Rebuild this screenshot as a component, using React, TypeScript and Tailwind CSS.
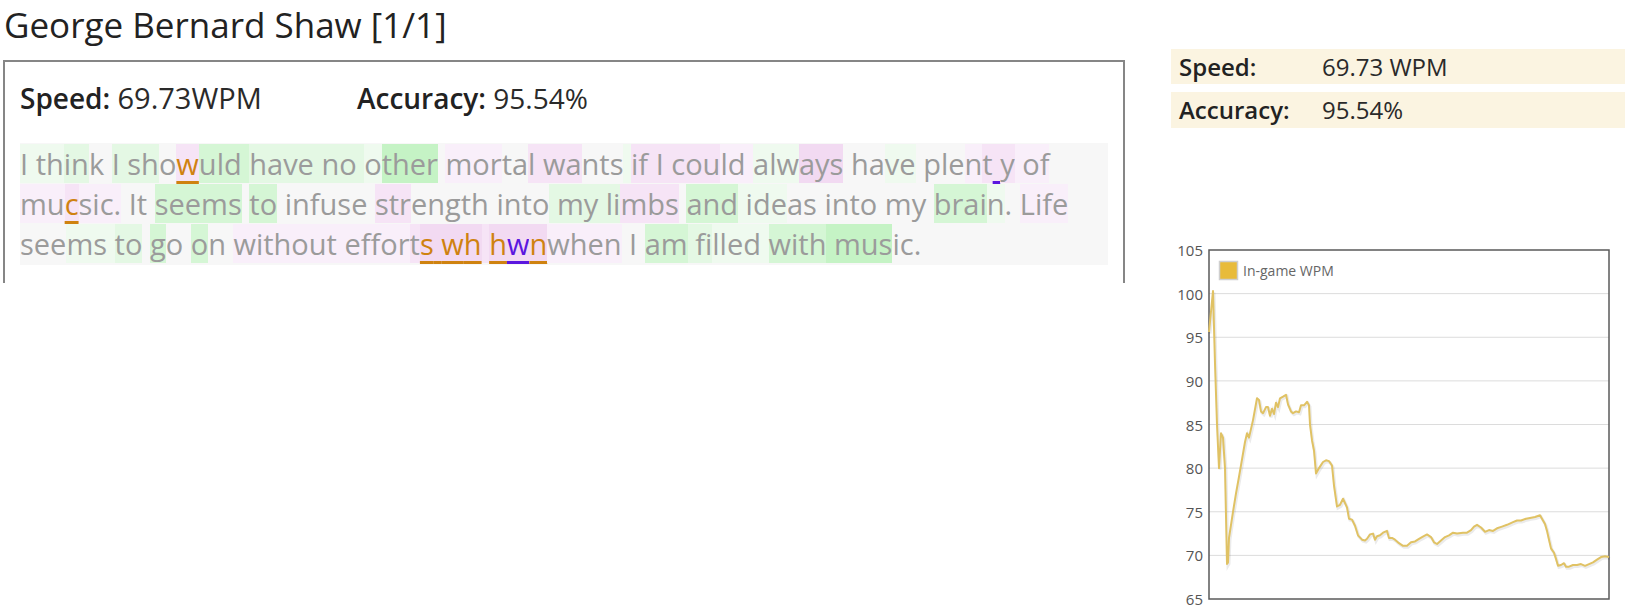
import React from "react";

type Seg = [string, string, string?];

const BG: Record<string, string> = {
  b: "bg-[#f7f7f7]",
  g1: "bg-[#effaef]",
  g2: "bg-[#e4f8e4]",
  g3: "bg-[#d5f6d5]",
  g4: "bg-[#c5f3c5]",
  p1: "bg-[#f9effa]",
  p2: "bg-[#f6e4f6]",
  p3: "bg-[#f2daf2]",
};

const lines: Seg[][] = [
  [
    ["I ", "g1"], ["th", "g1"], ["in", "g2"], ["k ", "b"], ["I sh", "g2"], ["o", "b"],
    ["w", "p2", "o"], ["uld ", "g3"], ["have no ", "g2"], ["o", "g1"], ["ther", "g4"],
    [" ", "b"], ["mor", "p1"], ["ta", "b"], ["l wa", "p2"], ["nts", "b"], [" ", "g1"],
    ["if I cou", "p2"], ["ld ", "p1"], ["alw", "g1"], ["ays", "p3"], [" ha", "b"],
    ["ve", "g1"], [" ple", "b"], ["n", "p1"], ["t", "p2"], [" ", "p2", "p"], ["y", "p2"],
    [" of", "p1"],
  ],
  [
    ["mu", "p1"], ["c", "p2", "o"], ["sic.", "p1"], [" It ", "b"], ["seems", "g3"],
    [" ", "b"], ["to", "g3"], [" infuse ", "b"], ["str", "p2"], ["ength ", "b"],
    ["into", "b"], [" my li", "g2"], ["mbs", "p2"], [" ", "b"], ["and", "g3"],
    [" ide", "g1"], ["as into my ", "b"], ["brai", "g3"], ["n", "g1"], [". ", "b"],
    ["Life", "p1"],
  ],
  [
    ["see", "b"], ["ms ", "g1"], ["to", "g2"], [" ", "b"], ["g", "g3"], ["o ", "b"],
    ["o", "g3"], ["n ", "b"], ["without ", "p1"], ["effor", "p1"], ["t", "p2"],
    ["s wh", "p3", "o"], [" ", "p2"], ["h", "p3", "o"], ["w", "p3", "p"], ["n", "p3", "o"],
    ["when", "p1"], [" I ", "b"], ["am", "g3"], [" fi", "g2"], ["lled ", "g1"],
    ["with", "g3"], [" mus", "g4"], ["ic.", "b"],
  ],
];

// [x in plot px, wpm]
const wpm: [number, number][] = [
  [0, 95.6], [4, 100.3], [6, 92], [8, 85], [10, 80], [12, 84], [14, 83.5], [16, 80],
  [18, 69], [19, 69.2], [20, 72], [24, 75], [27, 77.1], [30, 79], [33, 81], [36, 83],
  [38, 84], [40, 83.5], [42, 84.5], [44, 85.5], [48, 88], [50, 87.8], [52, 86.5],
  [54, 86.3], [57, 87], [59, 87], [61, 86], [63, 86.8], [65, 86.2], [67, 87.5], [69, 87],
  [71, 88], [74, 88.2], [77, 88.4], [79, 87.3], [82, 86.5], [84, 86.3], [87, 86.5],
  [90, 86.4], [92, 87.2], [95, 87.2], [98, 87.6], [100, 87.2], [101, 85], [103, 83.2],
  [105, 82], [107, 79.4], [110, 80], [114, 80.7], [117, 80.9], [120, 80.8], [123, 80.3],
  [125, 78], [128, 75.6], [131, 75.8], [134, 76.5], [136, 76], [138, 75.5], [140, 74.2],
  [143, 74.1], [146, 73.4], [149, 72.3], [153, 71.8], [156, 71.7], [158, 71.9],
  [161, 72.4], [164, 72.5], [166, 71.8], [168, 72.2], [171, 72.3], [174, 72.6],
  [178, 72.8], [180, 72], [183, 72], [186, 71.8], [190, 71.4], [194, 71.1], [198, 71.1],
  [202, 71.5], [206, 71.6], [210, 71.9], [213, 72.1], [218, 72.4], [222, 72.1],
  [225, 71.5], [228, 71.3], [232, 71.7], [236, 72.1], [240, 72.3], [244, 72.6],
  [248, 72.5], [254, 72.6], [258, 72.6], [262, 72.9], [265, 73.3], [268, 73.5],
  [272, 73.2], [276, 72.7], [280, 72.9], [284, 72.8], [288, 73.1], [293, 73.3],
  [298, 73.5], [304, 73.8], [308, 74], [312, 74], [317, 74.2], [321, 74.3], [326, 74.4],
  [331, 74.6], [333, 74.2], [336, 73.6], [338, 72.8], [340, 71.8], [342, 70.8],
  [345, 70.3], [347, 69.6], [349, 68.8], [352, 68.9], [355, 69.1], [357, 68.7],
  [360, 68.7], [364, 68.9], [368, 68.9], [372, 69], [376, 68.8], [380, 69], [384, 69.2],
  [388, 69.5], [392, 69.8], [396, 69.9], [400, 69.8],
];

const PX = 38;
const PY = 10;
const PW = 400;
const PH = 349;
const yOf = (v: number) => PY + ((105 - v) / 40) * PH;

function Chart() {
  const pts = wpm.map(([x, v]) => `${PX + x},${yOf(v).toFixed(1)}`).join(" ");
  const ticks = [105, 100, 95, 90, 85, 80, 75, 70, 65];
  return (
    <svg width="454" height="376" className="block">
      {ticks.map((t) => (
        <g key={t}>
          {t !== 105 && t !== 65 && (
            <line x1={PX} x2={PX + PW} y1={yOf(t)} y2={yOf(t)} stroke="#dcdcdc" strokeWidth="1" />
          )}
          <text
            x={PX - 6}
            y={yOf(t) + 6}
            textAnchor="end"
            fontSize="15"
            fill="#555"
            fontFamily="'Open Sans', sans-serif"
          >
            {t}
          </text>
        </g>
      ))}
      <rect x={PX} y={PY} width={PW} height={PH} fill="none" stroke="#5a5a5a" strokeWidth="1.5" />
      <polyline points={pts} fill="none" stroke="rgba(0,0,0,0.08)" strokeWidth="3" transform="translate(1,1.5)" />
      <polyline points={pts} fill="none" stroke="#e0c264" strokeWidth="2" strokeLinejoin="round" />
      <rect x="48.5" y="21.5" width="18" height="18" fill="#e8bb3a" stroke="#cfcfcf" strokeWidth="1.5" />
      <text x="72" y="36" fontSize="14" fill="#666" fontFamily="'Open Sans', sans-serif">
        In-game WPM
      </text>
    </svg>
  );
}

function TypedLine({ segs }: { segs: Seg[] }) {
  return (
    <div className="whitespace-pre">
      {segs.map(([text, bg, fx], i) => {
        if (!fx) {
          return (
            <span key={i} className={BG[bg]}>
              {text}
            </span>
          );
        }
        const color = fx === "o" ? "text-[#cf8210] decoration-[#cf8210]" : "text-[#5b16df] decoration-[#5b16df]";
        return (
          <span key={i} className={BG[bg]}>
            {text.split("").map((ch, j) => (
              <span key={j} className={`${color} underline decoration-[3px] underline-offset-[6px]`}>
                {ch}
              </span>
            ))}
          </span>
        );
      })}
    </div>
  );
}

export default function App() {
  return (
    <div className="flex w-[1625px] h-[616px] bg-white font-['Open_Sans',sans-serif] text-[#222] overflow-hidden">
      <div className="w-[1125px] pl-[3px]">
        <h1 className="pt-[3px] pl-[1px] text-[35px] leading-[43px] font-normal">George Bernard Shaw [1/1]</h1>
        <div className="mt-[14px] h-[223px] border-2 border-b-0 border-[#868686] px-[15px]">
          <div className="flex pt-[17px] text-[28px] leading-[38px] text-[#2a2a2a]">
            <span className="w-[337px]">
              <b className="font-semibold text-[#222]">Speed:</b> <span className="text-[29px]">69.73WPM</span>
            </span>
            <span>
              <b className="font-semibold text-[#222]">Accuracy:</b> 95.54%
            </span>
          </div>
          <div className="mt-[26px] bg-[#f7f7f7] py-[1px] text-[29px] leading-[40px] text-[#9b9b9b]">
            {lines.map((segs, i) => (
              <TypedLine key={i} segs={segs} />
            ))}
          </div>
        </div>
      </div>
      <div className="ml-[46px] flex-1 pt-[49px]">
        <div className="flex flex-col gap-[8px] text-[24px] text-[#2a2a2a]">
          <div className="flex h-[35px] items-center bg-[#fbf4e1] pl-[8px]">
            <span className="w-[143px] font-semibold text-[#222]">Speed:</span>
            <span>69.73 WPM</span>
          </div>
          <div className="flex h-[36px] items-center bg-[#fbf4e1] pl-[8px]">
            <span className="w-[143px] font-semibold text-[#222]">Accuracy:</span>
            <span>95.54%</span>
          </div>
        </div>
        <div className="mt-[112px]">
          <Chart />
        </div>
      </div>
    </div>
  );
}
